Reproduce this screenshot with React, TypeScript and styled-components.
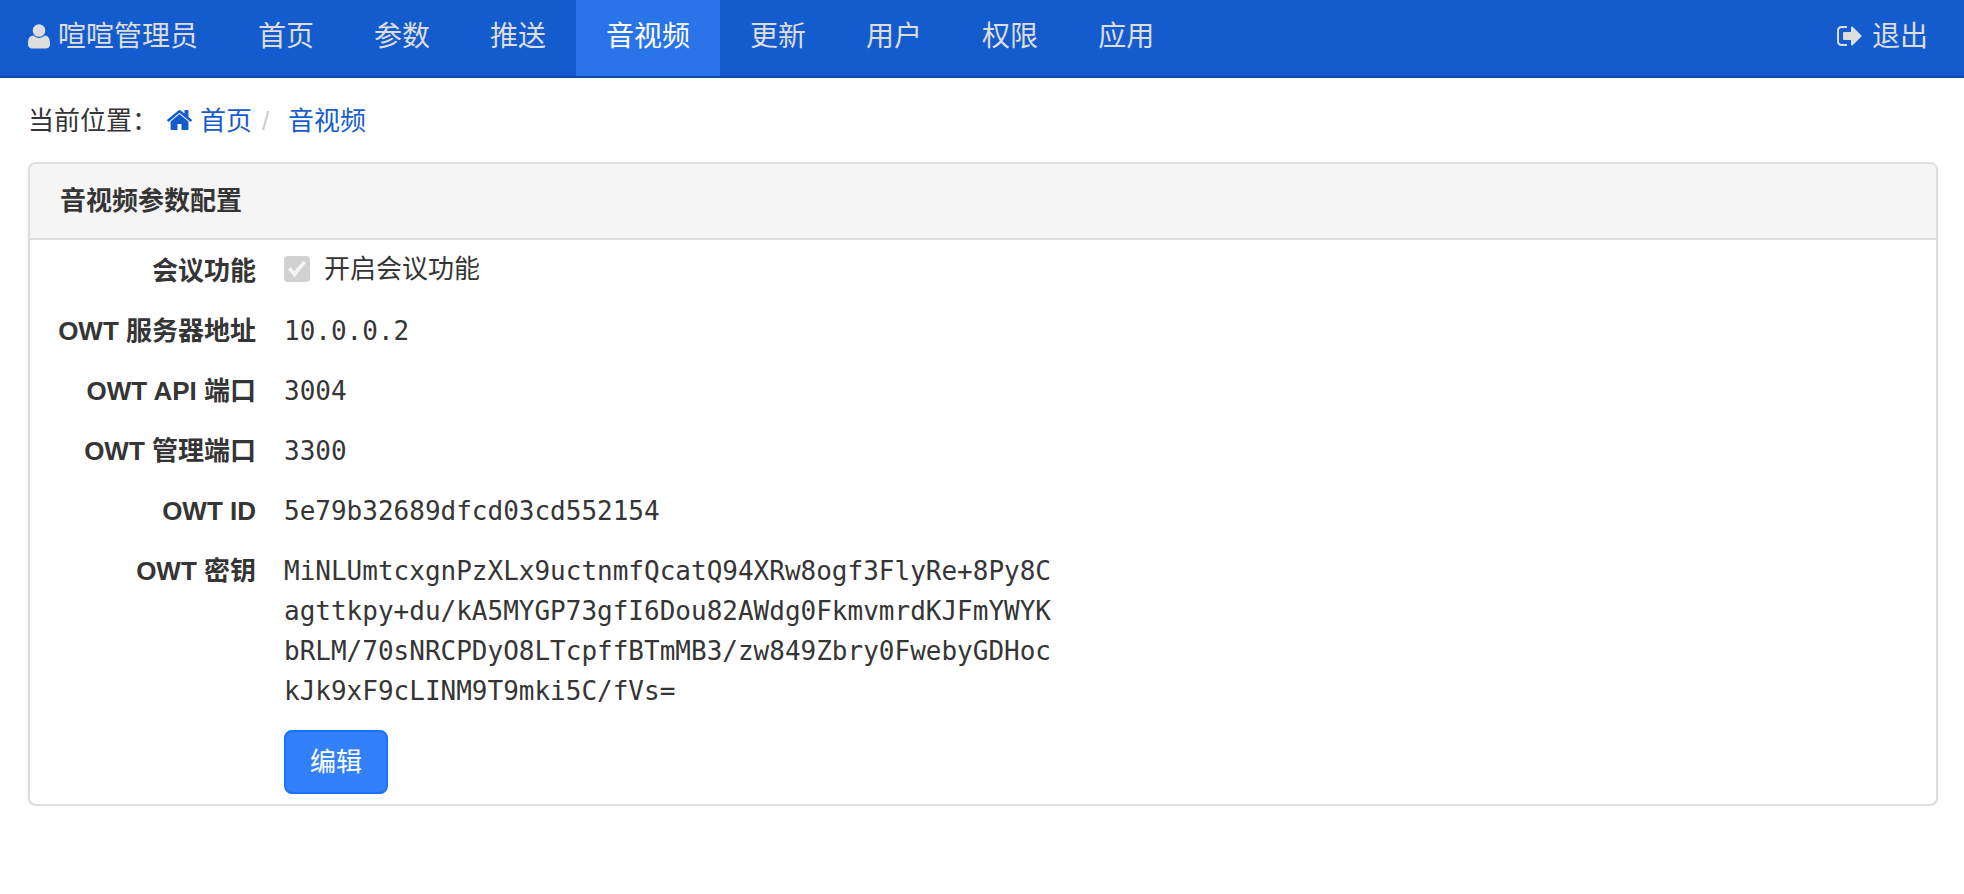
import React from "react";
import styled, { createGlobalStyle } from "styled-components";

const GlobalStyle = createGlobalStyle`
  *, *::before, *::after {
    box-sizing: border-box;
  }

  body {
    margin: 0;
    background: #fff;
    color: #353535;
    font-family: "Liberation Sans", "Noto Sans CJK SC", sans-serif;
    font-size: 26px;
    line-height: 40px;
  }
`;

const Navbar = styled.header`
  display: flex;
  justify-content: space-between;
  height: 78px;
  padding: 0 6px 0 28px;
  background: #145ccd;
  border-bottom: 2px solid #1049a2;
`;

const NavList = styled.ul`
  display: flex;
  margin: 0;
  padding: 0;
  list-style: none;
`;

const NavLink = styled.a<{ $active?: boolean; $first?: boolean }>`
  display: flex;
  align-items: center;
  gap: 8px;
  height: 76px;
  padding: 0 30px 2px ${(p) => (p.$first ? "0" : "30px")};
  background: ${(p) => (p.$active ? "#2974e9" : "transparent")};
  color: ${(p) => (p.$active ? "#fff" : "#ddd")};
  font-size: 28px;
  text-decoration: none;
  white-space: nowrap;

  &:hover {
    color: #fff;
  }
`;

const Icon = styled.svg`
  flex: none;
  display: block;
  margin-bottom: 2px;
  fill: currentColor;
`;

const Main = styled.main`
  padding: 0 26px 0 28px;
`;

const Breadcrumb = styled.nav`
  display: flex;
  align-items: center;
  height: 84px;
  padding-top: 2px;
`;

const Crumbs = styled.ol`
  display: flex;
  margin: 0;
  padding: 0 0 0 9px;
  list-style: none;
`;

const Crumb = styled.li`
  display: flex;

  & + &::before {
    content: "/";
    width: 36px;
    padding-left: 10px;
    color: #ccc;
  }
`;

const CrumbLink = styled.a`
  display: flex;
  align-items: center;
  gap: 8px;
  color: #145ccd;
  text-decoration: none;
`;

const Panel = styled.section`
  border: 2px solid #ddd;
  border-radius: 8px;
  box-shadow: 0 2px 4px rgba(0, 0, 0, 0.05);
  overflow: hidden;
`;

const PanelHeading = styled.h1`
  margin: 0;
  padding: 17px 30px;
  background: #f5f5f5;
  border-bottom: 2px solid #ddd;
  font-size: 26px;
  font-weight: 700;
  line-height: 40px;
`;

const Fields = styled.dl`
  margin: 0;
`;

const Field = styled.div`
  display: grid;
  grid-template-columns: 226px minmax(0, 768px);
  column-gap: 28px;
  padding: 11px 0 9px;
`;

const FieldName = styled.dt`
  font-weight: 700;
  text-align: right;
`;

const FieldValue = styled.dd`
  margin: 0;
`;

const Code = styled.span`
  display: block;
  font-family: "DejaVu Sans Mono", monospace;
  word-break: break-all;
`;

const CheckLabel = styled.label`
  display: flex;
  align-items: center;
  gap: 14px;
  height: 36px;
`;

const Checkbox = styled.input`
  appearance: none;
  display: grid;
  place-content: center;
  width: 26px;
  height: 26px;
  margin: 0;
  border-radius: 4px;
  background: #d1d1d1;

  &:checked::before {
    content: "";
    width: 18px;
    height: 17px;
    background: #f3f3f3;
    clip-path: polygon(0 53%, 14% 38%, 36% 62%, 86% 0, 100% 14%, 37% 100%);
  }
`;

const Actions = styled.div`
  padding: 10px 0 10px 254px;
`;

const EditButton = styled.button`
  display: block;
  padding: 10px 24px;
  background: #3280fc;
  border: 2px solid #1a71fc;
  border-radius: 8px;
  color: #fff;
  font: inherit;
  cursor: pointer;
`;

const UserIcon = () => (
  <Icon width="22" height="25" viewBox="0 0 22 25" aria-hidden="true">
    <circle cx="11" cy="6.5" r="6.3" />
    <path d="M0 20.5C0 15 1 11.5 5.5 11.5 7 13 9 13.9 11 13.9s4-.9 5.5-2.4C21 11.5 22 15 22 20.5c0 2.3-1.5 3.9-3.5 3.9h-15C1.5 24.4 0 22.8 0 20.5z" />
  </Icon>
);

const HomeIcon = () => (
  <Icon width="25" height="20" viewBox="90 254 1612 1282" aria-hidden="true">
    <path d="M1472 992v480q0 26-19 45t-45 19h-384v-384h-256v384h-384q-26 0-45-19t-19-45v-480q0-1 .5-3t.5-3l575-474 575 474q1 2 1 6zm223-69l-62 74q-8 9-21 11h-3q-13 0-21-7l-692-577-692 577q-12 8-24 7-13-2-21-11l-62-74q-8-10-7-23.5t11-21.5l719-599q32-26 76-26t76 26l244 204v-195q0-14 9-23t23-9h192q14 0 23 9t9 23v408l219 182q10 8 11 21.5t-7 23.5z" />
  </Icon>
);

const SignOutIcon = () => (
  <Icon width="27" height="20" viewBox="64 256 1728 1280" aria-hidden="true">
    <path d="M704 1440q0 4 1 20t.5 26.5-3 23.5-10 19.5-20.5 6.5h-320q-119 0-203.5-84.5t-84.5-203.5v-704q0-119 84.5-203.5t203.5-84.5h320q13 0 22.5 9.5t9.5 22.5q0 4 1 20t.5 26.5-3 23.5-10 19.5-20.5 6.5h-320q-66 0-113 47t-47 113v704q0 66 47 113t113 47h312l11.5 1 11.5 3 8 5.5 7 9 2 13.5zm928-544q0 26-19 45l-544 544q-19 19-45 19t-45-19-19-45v-288h-448q-26 0-45-19t-19-45v-384q0-26 19-45t45-19h448v-288q0-26 19-45t45-19 45 19l544 544q19 19 19 45z" />
  </Icon>
);

const navItems = ["首页", "参数", "推送", "音视频", "更新", "用户", "权限", "应用"];
const currentItem = "音视频";

const settings = [
  { name: "OWT 服务器地址", value: "10.0.0.2" },
  { name: "OWT API 端口", value: "3004" },
  { name: "OWT 管理端口", value: "3300" },
  { name: "OWT ID", value: "5e79b32689dfcd03cd552154" },
  {
    name: "OWT 密钥",
    value:
      "MiNLUmtcxgnPzXLx9uctnmfQcatQ94XRw8ogf3FlyRe+8Py8C" +
      "agttkpy+du/kA5MYGP73gfI6Dou82AWdg0FkmvmrdKJFmYWYK" +
      "bRLM/70sNRCPDyO8LTcpffBTmMB3/zw849Zbry0FwebyGDHoc" +
      "kJk9xF9cLINM9T9mki5C/fVs=",
  },
];

export default function App() {
  return (
    <>
      <GlobalStyle />
      <Navbar>
        <NavList>
          <li>
            <NavLink href="#profile" $first>
              <UserIcon />
              喧喧管理员
            </NavLink>
          </li>
          {navItems.map((item) => (
            <li key={item}>
              <NavLink
                href={`#${item}`}
                $active={item === currentItem}
                aria-current={item === currentItem ? "page" : undefined}
              >
                {item}
              </NavLink>
            </li>
          ))}
        </NavList>
        <NavList>
          <li>
            <NavLink href="#logout">
              <SignOutIcon />
              退出
            </NavLink>
          </li>
        </NavList>
      </Navbar>
      <Main>
        <Breadcrumb aria-label="当前位置">
          <span>当前位置：</span>
          <Crumbs>
            <Crumb>
              <CrumbLink href="#首页">
                <HomeIcon />
                首页
              </CrumbLink>
            </Crumb>
            <Crumb>
              <CrumbLink href="#音视频">音视频</CrumbLink>
            </Crumb>
          </Crumbs>
        </Breadcrumb>
        <Panel>
          <PanelHeading>音视频参数配置</PanelHeading>
          <Fields>
            <Field>
              <FieldName>会议功能</FieldName>
              <FieldValue>
                <CheckLabel>
                  <Checkbox type="checkbox" checked disabled readOnly />
                  开启会议功能
                </CheckLabel>
              </FieldValue>
            </Field>
            {settings.map(({ name, value }) => (
              <Field key={name}>
                <FieldName>{name}</FieldName>
                <FieldValue>
                  <Code>{value}</Code>
                </FieldValue>
              </Field>
            ))}
          </Fields>
          <Actions>
            <EditButton type="button">编辑</EditButton>
          </Actions>
        </Panel>
      </Main>
    </>
  );
}
